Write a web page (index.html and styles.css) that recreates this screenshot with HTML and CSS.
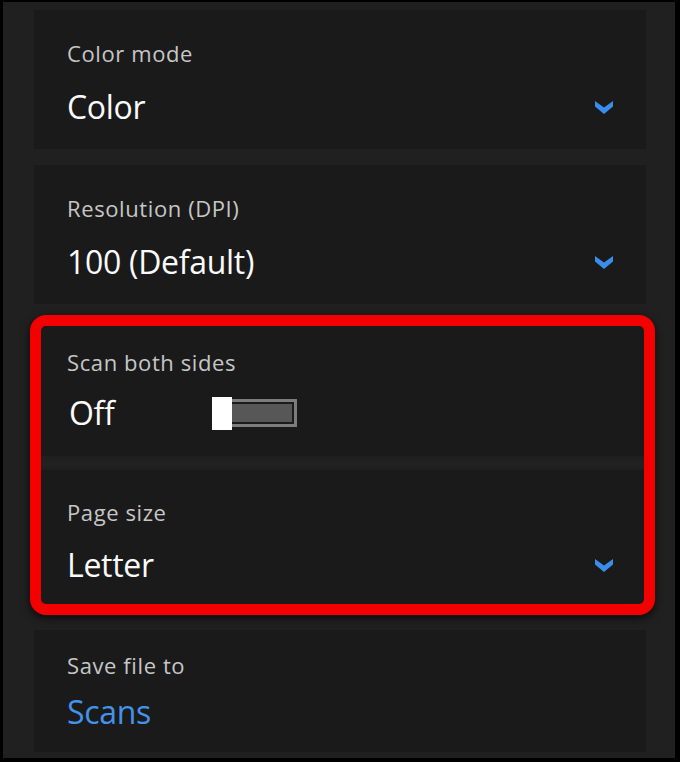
FILE: index.html
```html
<!DOCTYPE html>
<html lang="en">
<head>
  <meta charset="UTF-8" />
  <meta name="viewport" content="width=device-width, initial-scale=1.0" />
  <title>Scan | Settings</title>
  <link rel="stylesheet" href="styles.css">
</head>
<body>
  <div class="frame">

    <!-- Color mode -->
    <div class="card">
      <div class="label">Color mode</div>
      <div class="row">
        <div class="value">Color</div>
        <svg class="chev" viewBox="0 0 18 13"><polygon points="0,0 9,6.5 18,0 18,5.5 9,13 0,5.5" /></svg>
      </div>
    </div>

    <!-- Resolution -->
    <div class="card">
      <div class="label">Resolution (DPI)</div>
      <div class="row">
        <div class="value">100 (Default)</div>
        <svg class="chev" viewBox="0 0 18 13"><polygon points="0,0 9,6.5 18,0 18,5.5 9,13 0,5.5" /></svg>
      </div>
    </div>

    <!-- Highlighted group -->
    <div class="marked">
      <div class="section scan">
        <div class="label">Scan both sides</div>
        <div class="row">
          <div class="value off">Off</div>
          <div class="toggle"><span class="thumb"></span></div>
        </div>
      </div>
      <div class="divider"></div>
      <div class="section page">
        <div class="label">Page size</div>
        <div class="row">
          <div class="value">Letter</div>
          <svg class="chev" viewBox="0 0 18 13"><polygon points="0,0 9,6.5 18,0 18,5.5 9,13 0,5.5" /></svg>
        </div>
      </div>
    </div>

    <!-- Save location -->
    <div class="card save">
      <div class="label">Save file to</div>
      <div class="value link">Scans</div>
    </div>

  </div>
</body>
</html>
```

FILE: styles.css
```css
/* ---------- Base ---------- */
*, *::before, *::after { box-sizing: border-box; margin: 0; padding: 0; }
body{
  background:#000;
  font-family:"Open Sans", "Noto Sans", sans-serif;
  color:#fafafa;
}
.frame{
  margin:2px 5px 0 3px;
  height:756px;
  background:#202020;
  padding:8px 29px 0 31px;
}

/* ---------- Cards ---------- */
.card{
  background:#1a1a1a;
  height:139px;
  padding:28px 33px 0 33px;
  margin-bottom:16px;
}
.label{
  font-size:22px;line-height:30px;font-weight:500;
  color:#c6c6c6;letter-spacing:.6px;
}
.row{display:flex;align-items:center;margin-top:19px;}
.value{font-size:32px;line-height:40px;letter-spacing:-.3px;color:#fafafa;}
.chev{width:18px;height:13px;margin-left:auto;fill:#3a8dea;}

/* ---------- Red highlight ---------- */
.marked{
  margin:-5px -9px 0 -4px;
  border:11px solid #f40000;
  border-radius:16px;
  background:#1a1a1a;
  box-shadow:0 3px 8px rgba(0,0,0,.7);
  overflow:hidden;
}
.section{padding:0 31px 0 26px;}
.scan{height:130px;padding-top:21px;}
.scan .row{margin-top:16px;}
.page{height:134px;padding-top:27px;}
.page .row{margin-top:18px;}
.divider{height:14px;background:linear-gradient(#1e1e1e,#222 60%,#1e1e1e);}

/* ---------- Toggle ---------- */
.off{width:145px;padding-left:2px;}
.toggle{
  position:relative;
  width:85px;height:28px;
  border:3px solid #7c7c7c;
  background:#575757;
  box-shadow:inset 0 0 0 2px #1b1b1b;
}
.thumb{
  position:absolute;left:-3px;top:-5px;
  width:20px;height:33px;background:#fff;
}

/* ---------- Save ---------- */
.save{height:122px;padding-top:20px;margin:15px 0 0;}
.save .value{margin-top:12px;}
.link{color:#4393ea;}
```
